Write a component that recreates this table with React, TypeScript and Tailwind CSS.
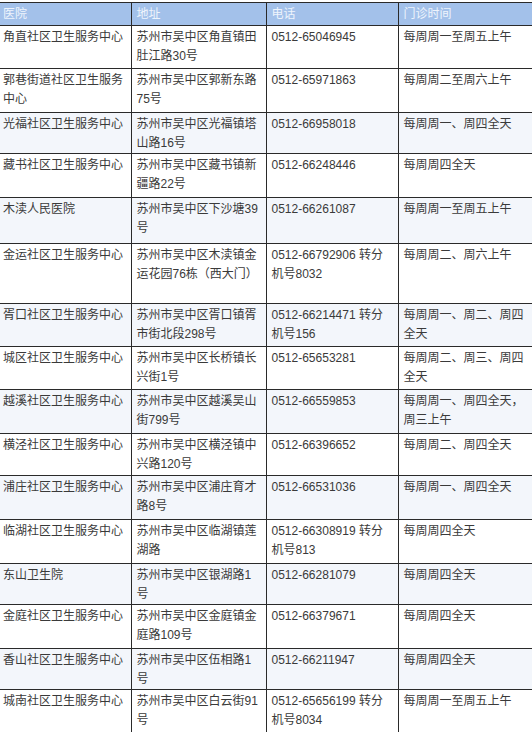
import React from 'react';

type Row = {
  name: string;
  addr: string;
  phone: string;
  time: string;
  h: string;
  alt: boolean;
};

const rows: Row[] = [
  { name: '角直社区卫生服务中心', addr: '苏州市吴中区角直镇田肚江路30号', phone: '0512-65046945', time: '每周周一至周五上午', h: 'h-[43px]', alt: false },
  { name: '郭巷街道社区卫生服务中心', addr: '苏州市吴中区郭新东路75号', phone: '0512-65971863', time: '每周周二至周六上午', h: 'h-[44px]', alt: false },
  { name: '光福社区卫生服务中心', addr: '苏州市吴中区光福镇塔山路16号', phone: '0512-66958018', time: '每周周一、周四全天', h: 'h-[41px]', alt: true },
  { name: '藏书社区卫生服务中心', addr: '苏州市吴中区藏书镇新疆路22号', phone: '0512-66248446', time: '每周周四全天', h: 'h-[44px]', alt: false },
  { name: '木渎人民医院', addr: '苏州市吴中区下沙塘39号', phone: '0512-66261087', time: '每周周一至周五上午', h: 'h-[46px]', alt: true },
  { name: '金运社区卫生服务中心', addr: '苏州市吴中区木渎镇金运花园76栋（西大门）', phone: '0512-66792906 转分机号8032', time: '每周周二、周六上午', h: 'h-[60px]', alt: false },
  { name: '胥口社区卫生服务中心', addr: '苏州市吴中区胥口镇胥市街北段298号', phone: '0512-66214471 转分机号156', time: '每周周一、周二、周四全天', h: 'h-[43px]', alt: true },
  { name: '城区社区卫生服务中心', addr: '苏州市吴中区长桥镇长兴街1号', phone: '0512-65653281', time: '每周周二、周三、周四全天', h: 'h-[43px]', alt: false },
  { name: '越溪社区卫生服务中心', addr: '苏州市吴中区越溪吴山街799号', phone: '0512-66559853', time: '每周周一、周四全天，周三上午', h: 'h-[44px]', alt: true },
  { name: '横泾社区卫生服务中心', addr: '苏州市吴中区横泾镇中兴路120号', phone: '0512-66396652', time: '每周周二、周四全天', h: 'h-[42px]', alt: false },
  { name: '浦庄社区卫生服务中心', addr: '苏州市吴中区浦庄育才路8号', phone: '0512-66531036', time: '每周周一、周四全天', h: 'h-[44px]', alt: true },
  { name: '临湖社区卫生服务中心', addr: '苏州市吴中区临湖镇莲湖路', phone: '0512-66308919 转分机号813', time: '每周周四全天', h: 'h-[44px]', alt: false },
  { name: '东山卫生院', addr: '苏州市吴中区银湖路1号', phone: '0512-66281079', time: '每周周四全天', h: 'h-[40px]', alt: true },
  { name: '金庭社区卫生服务中心', addr: '苏州市吴中区金庭镇金庭路109号', phone: '0512-66379671', time: '每周周四全天', h: 'h-[44px]', alt: false },
  { name: '香山社区卫生服务中心', addr: '苏州市吴中区伍相路1号', phone: '0512-66211947', time: '每周周四全天', h: 'h-[41px]', alt: true },
  { name: '城南社区卫生服务中心', addr: '苏州市吴中区白云街91号', phone: '0512-65656199 转分机号8034', time: '每周周一至周五上午', h: 'h-[46px]', alt: false },
];

const cell = 'align-top pt-[2px] px-[5px] leading-[19px] border-b border-[#2a2a2a]';

export default function App() {
  return (
    <div
      className="w-[532px] h-[732px] overflow-hidden bg-white pt-[2px] text-[12px] text-[#3a3a3a]"
      style={{ fontFamily: '"Liberation Sans", "Noto Sans CJK SC", sans-serif' }}
    >
      <table className="w-[532px] table-fixed border-collapse border-t border-[#2a2a2a]">
        <colgroup>
          <col className="w-[131px]" />
          <col className="w-[135px]" />
          <col className="w-[132px]" />
          <col className="w-[134px]" />
        </colgroup>
        <thead>
          <tr className="h-[23px] bg-[#a3c1ea] text-[#eef4fc]">
            <th className="text-left font-normal px-[3px] border-b border-r border-[#2a2a2a]">医院</th>
            <th className="text-left font-normal px-[5px] border-b border-r border-[#2a2a2a]">地址</th>
            <th className="text-left font-normal px-[5px] border-b border-r border-[#2a2a2a]">电话</th>
            <th className="text-left font-normal px-[5px] border-b border-[#2a2a2a]">门诊时间</th>
          </tr>
        </thead>
        <tbody>
          {rows.map((r) => (
            <tr key={r.name} className={`${r.h} ${r.alt ? 'bg-[#f3f6fb]' : 'bg-white'}`}>
              <td className={`${cell} pl-[3px] border-r`}>{r.name}</td>
              <td className={`${cell} border-r`}>{r.addr}</td>
              <td className={`${cell} border-r`}>{r.phone}</td>
              <td className={cell}>{r.time}</td>
            </tr>
          ))}
        </tbody>
      </table>
    </div>
  );
}
